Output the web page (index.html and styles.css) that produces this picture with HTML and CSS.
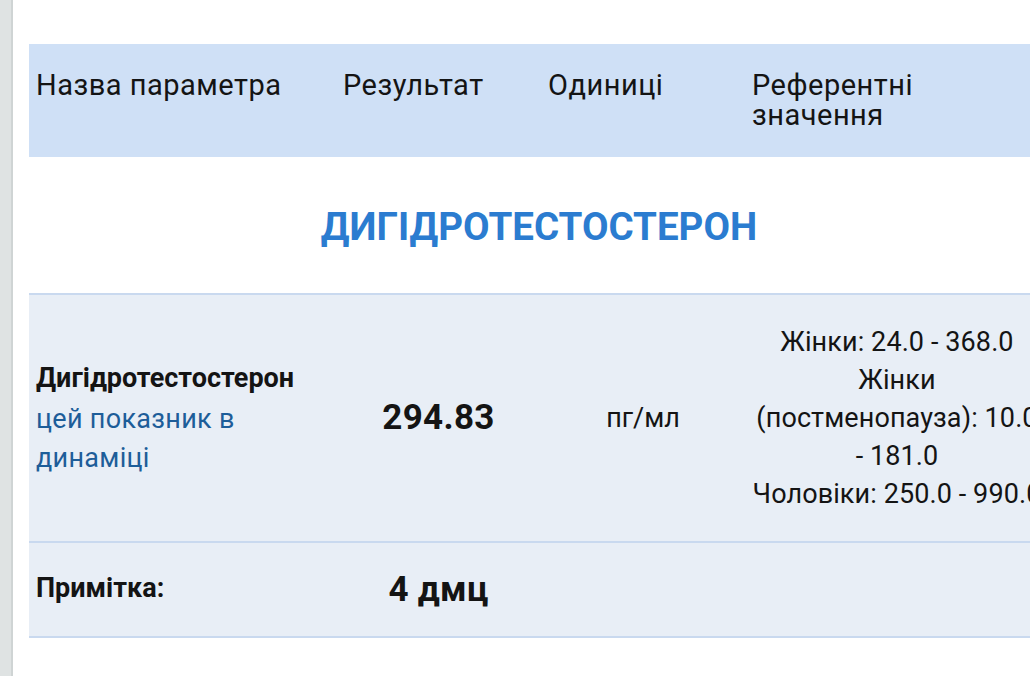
FILE: index.html
```html
<!DOCTYPE html>
<html lang="uk">
<head>
    <meta charset="UTF-8">
    <meta name="viewport" content="width=device-width, initial-scale=1.0">
    <title>Результати аналізів</title>
    <link rel="stylesheet" href="styles.css">
</head>
<body>
    <div class="page">
        <div class="page_rail"></div>

        <main class="page_content">
            <table class="res_table">
                <thead>
                    <tr class="res_head">
                        <th class="res_col_name">Назва параметра</th>
                        <th class="res_col_val">Результат</th>
                        <th class="res_col_unit">Одиниці</th>
                        <th class="res_col_ref">Референтні значення</th>
                    </tr>
                </thead>
                <tbody>
                    <tr class="res_group">
                        <td colspan="4">ДИГІДРОТЕСТОСТЕРОН</td>
                    </tr>

                    <tr class="res_row">
                        <td class="res_name">
                            <div class="res_name_title">Дигідротестостерон</div>
                            <a href="#" class="res_name_link">цей показник в динаміці</a>
                        </td>
                        <td class="res_value">294.83</td>
                        <td class="res_unit">пг/мл</td>
                        <td class="res_ref">
                            Жінки: 24.0 <span class="nw">- 368.0</span><br>
                            Жінки (постменопауза): 10.0 <span class="nw">- 181.0</span><br>
                            Чоловіки: 250.0 <span class="nw">- 990.0</span>
                        </td>
                    </tr>

                    <tr class="res_row res_note">
                        <td class="res_name"><div class="res_name_title">Примітка:</div></td>
                        <td class="res_value">4 дмц</td>
                        <td></td>
                        <td></td>
                    </tr>
                </tbody>
            </table>
        </main>
    </div>
</body>
</html>
```

FILE: styles.css
```css
* {
    margin: 0;
    padding: 0;
    box-sizing: border-box;
}

body {
    font-family: Roboto, "Noto Sans", sans-serif;
    background: white;
    color: #141414;
    overflow: hidden;
}

.page {
    display: flex;
    min-height: 676px;
}

.page_rail {
    flex: 0 0 13px;
    background: #dfe3e3;
    border-right: 2px solid #cfd4d4;
}

.page_content {
    flex: 1;
    padding: 44px 0 0 16px;
    min-width: 0;
}

.res_table {
    width: 1020px;
    border-collapse: collapse;
    table-layout: fixed;
}

.res_col_name { width: 307px; }
.res_col_val { width: 205px; }
.res_col_unit { width: 204px; }
.res_col_ref { width: 304px; }

/* header */
.res_head {
    background: #cfe0f6;
}

.res_head th {
    text-align: left;
    font-weight: 400;
    font-size: 29px;
    line-height: 30px;
    letter-spacing: 0.5px;
    padding: 26px 7px 27px;
    vertical-align: baseline;
}

/* group title */
.res_group td {
    text-align: center;
    color: #2b7cd0;
    font-weight: 700;
    font-size: 38.5px;
    height: 137px;
    padding-top: 2px;
    vertical-align: middle;
}

/* rows */
.res_row {
    background: #e8eef6;
    border-top: 2px solid #c9d9ef;
    border-bottom: 2px solid #c9d9ef;
}

.res_row td {
    padding: 28px 7px;
    vertical-align: middle;
    font-size: 27px;
    line-height: 38px;
}

.res_name {
    line-height: 39px !important;
}

.res_name_title {
    font-weight: 700;
    margin-bottom: 2px;
}

.res_name_link {
    color: #1d5d99;
    text-decoration: none;
    letter-spacing: 0.3px;
}

.res_value {
    text-align: center;
    font-weight: 700;
    font-size: 35px !important;
    letter-spacing: 0.3px;
}

.res_unit,
.res_ref {
    text-align: center;
}

.res_row .res_ref {
    padding-left: 4px;
    padding-right: 4px;
    letter-spacing: 0.1px;
}

.nw {
    white-space: nowrap;
}

.res_note td {
    height: 95px;
    padding-top: 0;
    padding-bottom: 0;
}
```
